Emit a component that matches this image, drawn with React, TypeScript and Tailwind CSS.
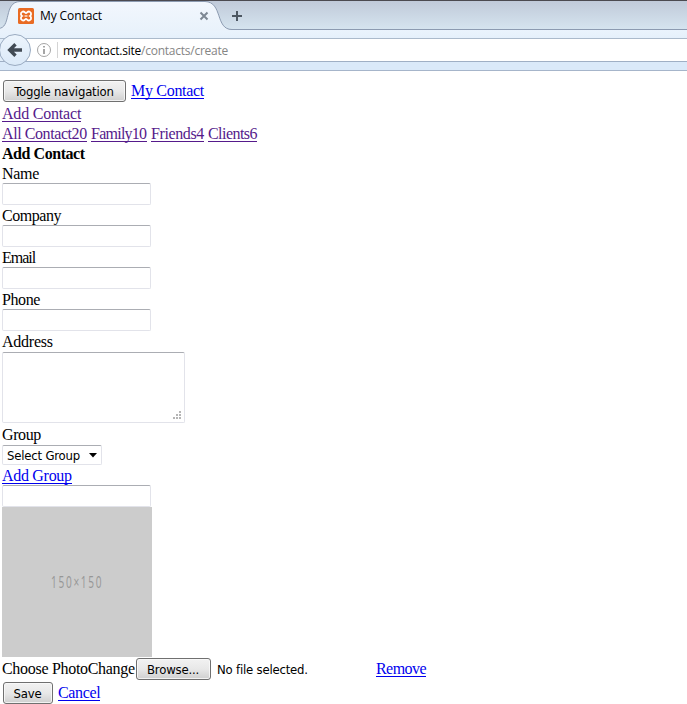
import type { ReactNode } from 'react';

const ui = 'font-["DejaVu_Sans_Condensed","DejaVu_Sans",sans-serif] [font-stretch:condensed] text-[13px] tracking-[-0.2px]';

function Link({ children, className = 'text-[#0000ee]' }: { children: ReactNode; className?: string }) {
  return (
    <a className={`block h-[17px] border-b border-current whitespace-nowrap leading-[17px] ${className}`}>
      {children}
    </a>
  );
}

function Button({ children, className }: { children: ReactNode; className: string }) {
  return (
    <button
      className={`flex h-[22px] shrink-0 items-center justify-center rounded-[3px] border border-[#707070] bg-linear-to-b from-[#f2f2f2] from-0% via-[#e8e8e8] via-50% to-[#cfcfcf] pt-[2px] pr-px whitespace-nowrap text-black shadow-[inset_0_0_0_1px_#fafafacc] ${ui} ${className}`}
    >
      {children}
    </button>
  );
}

function TextBox() {
  return <input className="block h-[22px] w-[149px] rounded-[2px] border border-[#e2e3ea] border-t-[#abadb3] bg-white" />;
}

function Field({ label, className }: { label: string; className: string }) {
  return (
    <div className="h-[42px]">
      <label className={`block h-5 leading-[22px] ${className}`}>{label}</label>
      <TextBox />
    </div>
  );
}

function Browser() {
  return (
    <header className="relative h-[71px] w-full overflow-hidden">
      <div className="h-px bg-[#4b4a50]" />
      <div className="h-7 bg-linear-to-b from-[#c0cad9] to-[#d5e4ef]" />
      <div className="h-px bg-[#8c9bb1]" />
      <div className="h-2 bg-linear-to-b from-[#eaf3fc] to-[#e5f0fb]" />
      <div className="h-px bg-[#abbacb]" />
      <div className="h-[22px] bg-white" />
      <div className="h-px bg-[#9fafc5]" />
      <div className="h-2 bg-[#dae9f9]" />
      <div className="h-px bg-[#a6b5ca]" />

      <svg className="absolute top-0 left-0" width="260" height="71" viewBox="0 0 260 71" fill="none">
        <defs>
          <linearGradient id="tab" x1="0" y1="0" x2="0" y2="1">
            <stop stopColor="#f2f7fd" />
            <stop offset="1" stopColor="#e9f2fb" />
          </linearGradient>
          <linearGradient id="back" x1="0" y1="0" x2="0" y2="1">
            <stop stopColor="#edf5fd" />
            <stop offset="1" stopColor="#dbe9f8" />
          </linearGradient>
        </defs>
        <path d="M-2 28.5C12 28.5 3 2 20 1.5H205C223 2 215 29.5 232 29.5V31H-2Z" fill="url(#tab)" />
        <path d="M-2 28.5C12 28.5 3 2 20 1.5H205C223 2 215 29.5 232 29.5" stroke="#8c9bb1" />
        <rect y="39" width="27" height="22" fill="#e1edf9" />
        <circle cx="15" cy="50" r="15.5" fill="url(#back)" stroke="#9aabc1" />
        <path d="M22 50H10M15.5 44.2L9.7 50L15.5 55.8" stroke="#414a54" strokeWidth="3.4" />
        <rect x="18" y="8" width="16" height="16" rx="1.5" fill="#e96b23" />
        <path
          d="M22.3 11.7C24.2 10.6 25 13.2 26 13.2C27 13.2 27.8 10.6 29.7 11.7C32.2 13 30.8 15.5 30 16C30.8 16.5 32.2 19 29.7 20.3C27.8 21.4 27 18.8 26 18.8C25 18.8 24.2 21.4 22.3 20.3C19.8 19 21.2 16.5 22 16C21.2 15.5 19.8 13 22.3 11.7Z"
          stroke="white"
          strokeWidth="1.8"
        />
        <path d="M24.5 16H27.5" stroke="white" strokeWidth="1.2" />
        <path d="M200.5 12.5L207.5 19.5M207.5 12.5L200.5 19.5" stroke="#7d8793" strokeWidth="2" />
        <path d="M232 16H242M237 11V21" stroke="#4d5762" strokeWidth="2" />
        <circle cx="44" cy="50" r="6.5" stroke="#a5a5a5" />
        <path d="M44 46V47.5M44 49V54" stroke="#8f8f8f" strokeWidth="1.6" />
        <path d="M57.5 42V58" stroke="#d4d4d4" />
      </svg>
      <span className="absolute top-2 left-10 font-['Open_Sans',sans-serif] text-[12px] leading-[16px] tracking-[-0.1px] whitespace-nowrap text-black">
        My Contact
      </span>
      <span className="absolute top-[43px] left-[63px] font-['Open_Sans',sans-serif] text-[12px] leading-[16px] tracking-[-0.24px] whitespace-nowrap text-[#858585]">
        <span className="text-black">mycontact.site</span>/contacts/create
      </span>
    </header>
  );
}

export default function App() {
  return (
    <div className="h-[704px] w-[687px] overflow-hidden bg-white font-['Liberation_Serif',serif] text-[16px] text-black">
      <Browser />
      <main className="pt-[9px] pl-[2px]">
        <div className="flex h-6 items-start gap-[5px] pl-px">
          <Button className="w-[123px]">Toggle navigation</Button>
          <span className="flex pt-[2px]"><Link className="tracking-[-0.3px] text-[#0000ee]">My Contact</Link></span>
        </div>
        <nav>
          <div className="flex h-5 pt-px"><Link className="tracking-[-0.2px] text-[#551a8b]">Add Contact</Link></div>
          <div className="flex h-5 gap-1 pt-px">
            <Link className="w-[85px] tracking-[-0.42px] text-[#551a8b]">All Contact20</Link>
            <Link className="w-[56px] tracking-[-0.75px] text-[#551a8b]">Family10</Link>
            <Link className="w-[53px] tracking-[-0.38px] text-[#551a8b]">Friends4</Link>
            <Link className="w-[49px] tracking-[-0.55px] text-[#551a8b]">Clients6</Link>
          </div>
        </nav>
        <form>
          <h1 className="h-[19px] font-bold leading-[20px] tracking-[-0.45px]">Add Contact</h1>
          <Field label="Name" className="tracking-[-0.3px]" />
          <Field label="Company" className="tracking-[-0.45px]" />
          <Field label="Email" className="tracking-[-1px]" />
          <Field label="Phone" className="tracking-[-0.4px]" />
          <label className="block h-[21px] leading-[22px] tracking-[-0.25px]">Address</label>
          <div className="flex h-[71px] w-[183px] items-end justify-end rounded-[2px] border border-[#e2e3ea] border-t-[#abadb3] p-[2px]">
            <svg width="9" height="9" fill="#b5b5b5">
              <path d="M6 0h2v2h-2zM3 3h2v2h-2zM6 3h2v2h-2zM0 6h2v2h-2zM3 6h2v2h-2zM6 6h2v2h-2z" />
            </svg>
          </div>
          <label className="block h-[22px] pt-px leading-[22px] tracking-[-0.4px]">Group</label>
          <div className={`flex h-5 w-[100px] items-center justify-between rounded-[2px] border border-[#e2e3ea] border-t-[#abadb3] pr-1 pl-1 ${ui}`}>
            <span className="pt-[2px]">Select Group</span>
            <svg width="8" height="5" fill="black"><path d="M0 0H8L4 4.5Z" /></svg>
          </div>
          <div className="flex h-5 pt-[2px]"><Link className="tracking-[-0.3px] text-[#0000ee]">Add Group</Link></div>
          <TextBox />
          <div className="flex h-[150px] w-[150px] items-center justify-center bg-[#cccccc] pt-px text-[#969696]">
            <span className="scale-x-[.65] font-['Open_Sans',sans-serif] text-[15.5px] tracking-[2.6px] whitespace-nowrap">150×150</span>
          </div>
          <div className="flex h-[25px] items-start pt-px">
            <span className="w-[134px] shrink-0 whitespace-nowrap leading-[22px] tracking-[-0.3px]">Choose PhotoChange</span>
            <Button className="w-[75px]">Browse...</Button>
            <span className={`ml-[6px] w-[159px] leading-[24px] ${ui}`}>No file selected.</span>
            <span className="flex pt-[2px]"><Link className="tracking-[-0.55px] text-[#0000ee]">Remove</Link></span>
          </div>
          <div className="flex h-[22px] items-start gap-[5px] pl-px">
            <Button className="w-[50px]">Save</Button>
            <span className="flex pt-[2px]"><Link className="tracking-[-0.35px] text-[#0000ee]">Cancel</Link></span>
          </div>
        </form>
      </main>
    </div>
  );
}
